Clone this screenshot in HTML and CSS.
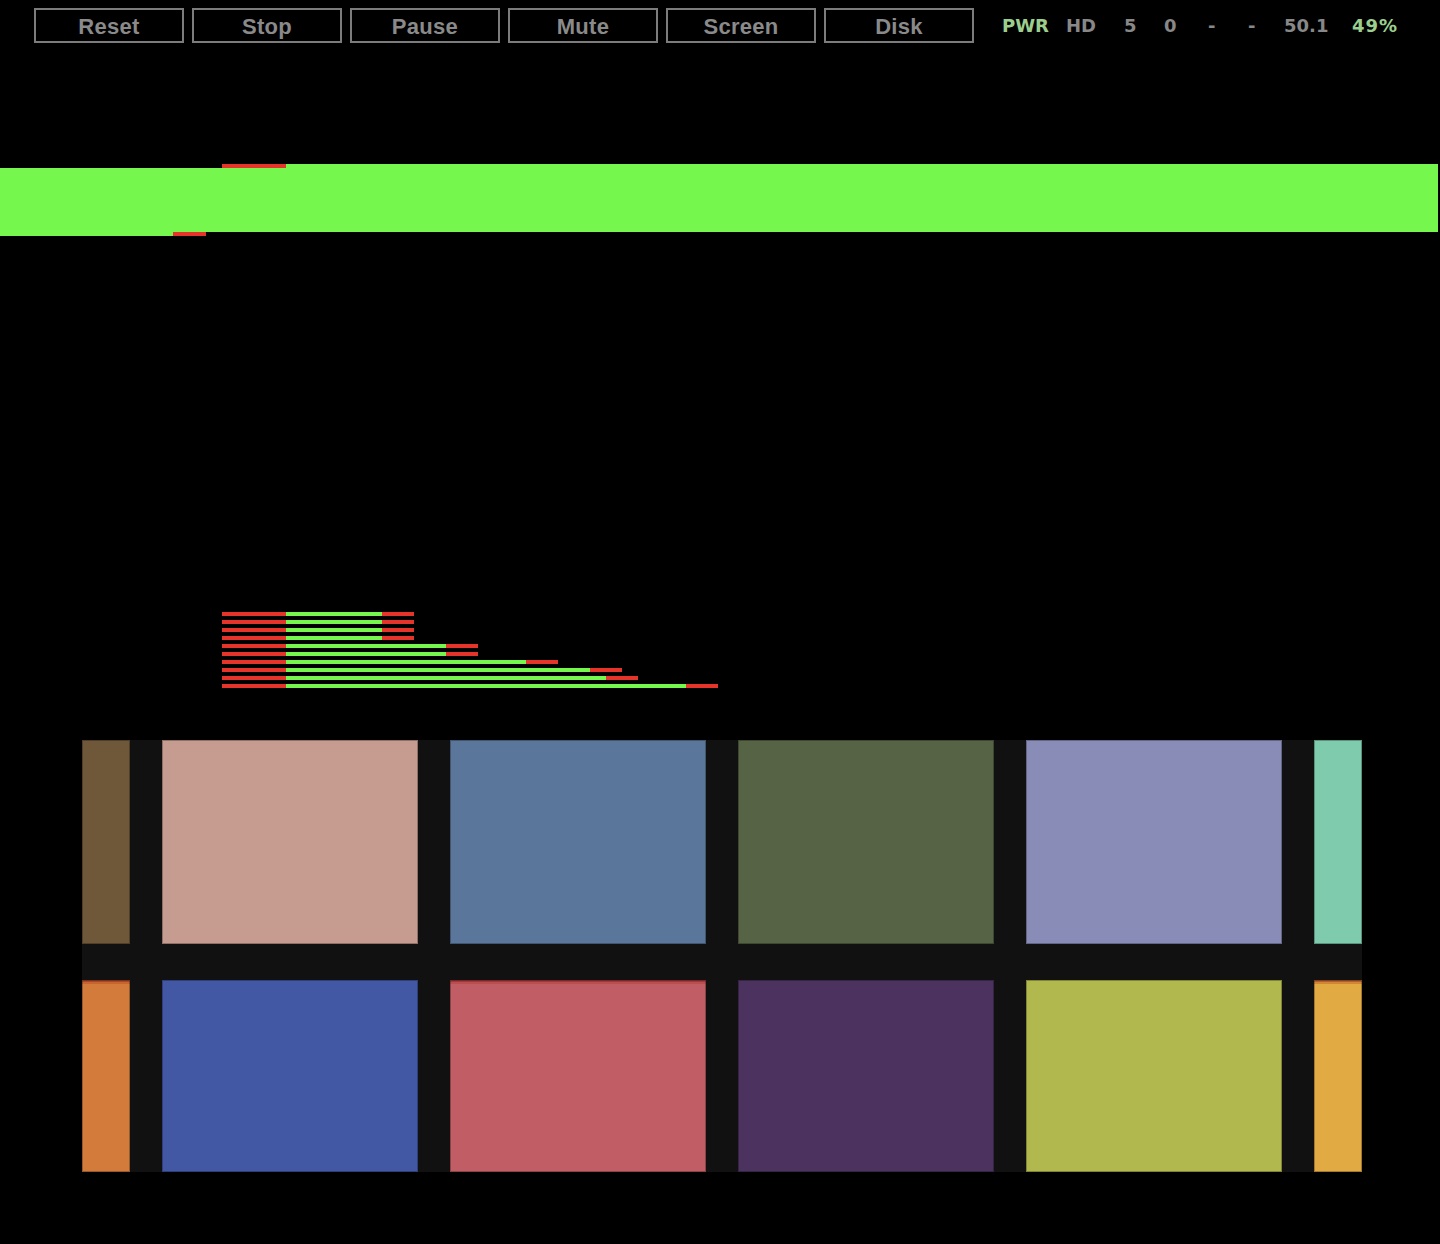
FILE: index.html
```html
<!DOCTYPE html>
<html>
<head>
<meta charset="utf-8">
<link rel="stylesheet" href="styles.css">
</head>
<body>
<div class="topbar">
  <div class="buttons">
    <button class="btn">Reset</button>
    <button class="btn">Stop</button>
    <button class="btn">Pause</button>
    <button class="btn">Mute</button>
    <button class="btn">Screen</button>
    <button class="btn">Disk</button>
  </div>
  <div class="status">
    <span class="st on w-pwr">PWR</span>
    <span class="st w-hd">HD</span>
    <span class="st w-a">5</span>
    <span class="st w-b">0</span>
    <span class="st w-a">-</span>
    <span class="st w-c">-</span>
    <span class="st w-d">50.1</span>
    <span class="st on pct">49%</span>
  </div>
</div>

<svg class="chart" width="1440" height="697" viewBox="0 43 1440 697" shape-rendering="crispEdges">
  <g class="bar">
    <rect x="0" y="168" width="286" height="64" fill="#76f74e"/>
    <rect x="0" y="232" width="173" height="4" fill="#76f74e"/>
    <rect x="173" y="232" width="33" height="4" fill="#e5352a"/>
    <rect x="222" y="164" width="64" height="4" fill="#e5352a"/>
    <rect x="286" y="164" width="1152" height="68" fill="#76f74e"/>
  </g>
  <g class="lines">
    <rect x="222" y="612" width="64" height="4" fill="#e5352a"/><rect x="286" y="612" width="96" height="4" fill="#76f74e"/><rect x="382" y="612" width="32" height="4" fill="#e5352a"/>
    <rect x="222" y="620" width="64" height="4" fill="#e5352a"/><rect x="286" y="620" width="96" height="4" fill="#76f74e"/><rect x="382" y="620" width="32" height="4" fill="#e5352a"/>
    <rect x="222" y="628" width="64" height="4" fill="#e5352a"/><rect x="286" y="628" width="96" height="4" fill="#76f74e"/><rect x="382" y="628" width="32" height="4" fill="#e5352a"/>
    <rect x="222" y="636" width="64" height="4" fill="#e5352a"/><rect x="286" y="636" width="96" height="4" fill="#76f74e"/><rect x="382" y="636" width="32" height="4" fill="#e5352a"/>
    <rect x="222" y="644" width="64" height="4" fill="#e5352a"/><rect x="286" y="644" width="160" height="4" fill="#76f74e"/><rect x="446" y="644" width="32" height="4" fill="#e5352a"/>
    <rect x="222" y="652" width="64" height="4" fill="#e5352a"/><rect x="286" y="652" width="160" height="4" fill="#76f74e"/><rect x="446" y="652" width="32" height="4" fill="#e5352a"/>
    <rect x="222" y="660" width="64" height="4" fill="#e5352a"/><rect x="286" y="660" width="240" height="4" fill="#76f74e"/><rect x="526" y="660" width="32" height="4" fill="#e5352a"/>
    <rect x="222" y="668" width="64" height="4" fill="#e5352a"/><rect x="286" y="668" width="304" height="4" fill="#76f74e"/><rect x="590" y="668" width="32" height="4" fill="#e5352a"/>
    <rect x="222" y="676" width="64" height="4" fill="#e5352a"/><rect x="286" y="676" width="320" height="4" fill="#76f74e"/><rect x="606" y="676" width="32" height="4" fill="#e5352a"/>
    <rect x="222" y="684" width="64" height="4" fill="#e5352a"/><rect x="286" y="684" width="400" height="4" fill="#76f74e"/><rect x="686" y="684" width="32" height="4" fill="#e5352a"/>
  </g>
</svg>

<div class="tiles">
  <div class="tile c1"></div>
  <div class="tile c2"></div>
  <div class="tile c3"></div>
  <div class="tile c4"></div>
  <div class="tile c5"></div>
  <div class="tile c6"></div>
  <div class="tile c7 striped"></div>
  <div class="tile c8"></div>
  <div class="tile c9 striped"></div>
  <div class="tile c10"></div>
  <div class="tile c11"></div>
  <div class="tile c12 striped"></div>
</div>
</body>
</html>
```

FILE: styles.css
```css
html, body {
  margin: 0;
  padding: 0;
  background: #000;
}

body {
  width: 1440px;
  height: 1244px;
  overflow: hidden;
  font-family: "Liberation Sans", Arial, sans-serif;
}

.topbar {
  display: flex;
  align-items: center;
  padding: 8px 0 0 34px;
  height: 35px;
}

.buttons {
  display: flex;
  gap: 8px;
}

.btn {
  box-sizing: border-box;
  width: 150px;
  height: 35px;
  margin: 0;
  padding: 2px 0 0 0;
  background: transparent;
  border: 2px solid #7c7c7c;
  border-radius: 0;
  color: #8a8a8a;
  font-family: "Liberation Sans", Arial, sans-serif;
  font-weight: bold;
  font-size: 22px;
  line-height: 24px;
  letter-spacing: 0.3px;
  text-align: center;
}

.status {
  display: flex;
  align-items: center;
  margin-left: 28px;
  font-family: "DejaVu Sans", Verdana, sans-serif;
  font-weight: bold;
  font-size: 18px;
  line-height: 21px;
  color: #888;
}

.st { display: block; }
.st.on { color: #9ccf8e; }
.pct { letter-spacing: 1px; }
.w-pwr { width: 64px; }
.w-hd { width: 58px; }
.w-a { width: 40px; }
.w-b { width: 44px; }
.w-c { width: 36px; }
.w-d { width: 68px; }

.chart {
  display: block;
}

.tiles {
  display: grid;
  grid-template-columns: 48px 256px 256px 256px 256px 48px;
  grid-template-rows: 204px 192px;
  column-gap: 32px;
  row-gap: 36px;
  width: 1280px;
  margin-left: 82px;
  background: #111;
}

.tile {
  box-shadow: inset 0 0 0 1px rgba(0, 0, 0, 0.28);
}

.striped {
  background-image: linear-gradient(to bottom, rgba(130, 20, 20, 0.5) 0, rgba(130, 20, 20, 0.5) 2px, rgba(170, 40, 20, 0.28) 2px, rgba(170, 40, 20, 0.28) 4px, transparent 4px);
}

.c1 { background-color: #6f5739; }
.c2 { background-color: #c79c90; }
.c3 { background-color: #5a769a; }
.c4 { background-color: #566345; }
.c5 { background-color: #8a8cb8; }
.c6 { background-color: #7fcbae; }
.c7 { background-color: #d37b3b; }
.c8 { background-color: #4358a5; }
.c9 { background-color: #c15e65; }
.c10 { background-color: #4c335f; }
.c11 { background-color: #b1b84d; }
.c12 { background-color: #e2aa42; }
```
